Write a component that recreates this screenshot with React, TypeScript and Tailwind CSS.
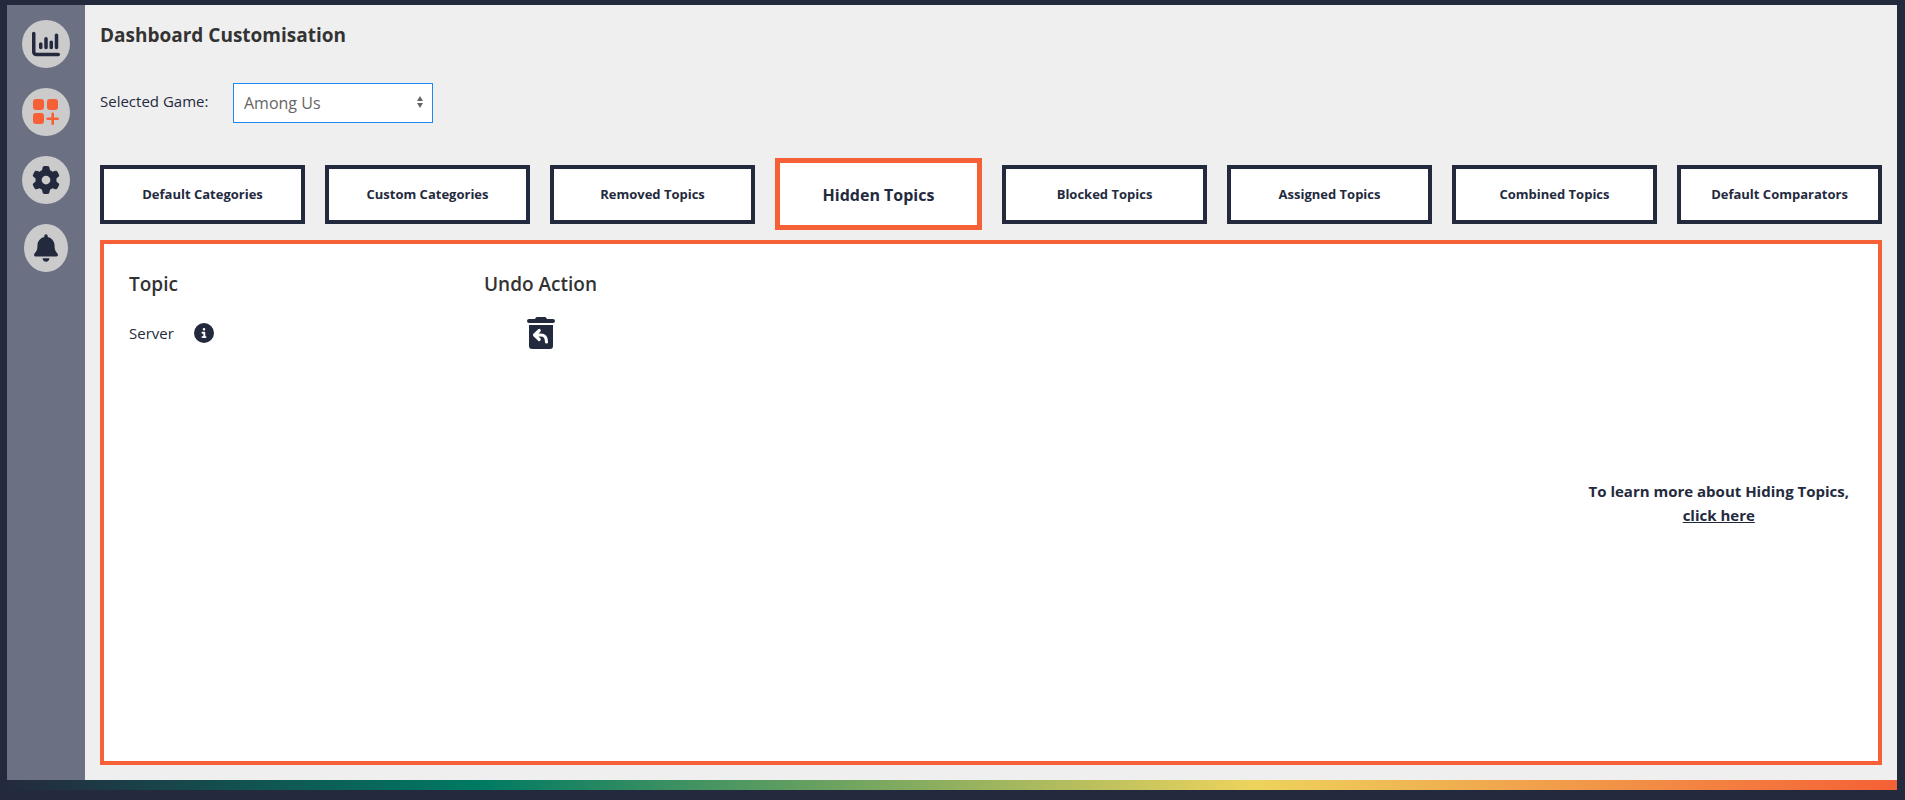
import React from 'react';
import { FaBell, FaChartColumn, FaCircleInfo, FaGear } from 'react-icons/fa6';
import clsx from 'clsx';

const tabs = [
  'Default Categories',
  'Custom Categories',
  'Removed Topics',
  'Hidden Topics',
  'Blocked Topics',
  'Assigned Topics',
  'Combined Topics',
  'Default Comparators',
];

const hiddenTopics = ['Server'];

export default function App() {
  return (
    <div className="min-h-screen flex flex-col bg-[#242a3e] pt-[5px] pb-[10px] pl-[7px] pr-2 font-['Open_Sans','Noto_Sans',sans-serif] text-[#242a3e]">
      <div className="flex-1 flex bg-[#efefef]">
        <Sidebar />
        <main className="flex-1 min-w-0 flex flex-col p-[15px]">
          <h1 className="text-[19px] leading-[30px] font-bold text-[#333333]">Dashboard Customisation</h1>

          {/* Game picker */}
          <div className="flex items-start mt-[33px]">
            <label htmlFor="game" className="w-[133px] text-[15px] leading-9">Selected Game:</label>
            <div className="relative">
              <select
                id="game"
                className="block appearance-none w-[200px] h-10 px-[10px] border border-[#1e87f0] bg-white text-base text-[#666666] outline-none"
              >
                <option>Among Us</option>
              </select>
              <svg className="absolute right-[10px] top-[13px] pointer-events-none" width="6" height="12" viewBox="0 0 6 12" fill="#666666">
                <path d="M0 5 3 0 6 5ZM0 7 3 12 6 7Z" />
              </svg>
            </div>
          </div>

          <nav className="flex items-center gap-5 mt-[35px]">
            {tabs.map((tab) => (
              <TabButton key={tab} label={tab} active={tab === 'Hidden Topics'} />
            ))}
          </nav>

          {/* Hidden topics panel */}
          <section className="flex-1 flex items-center justify-between mt-[10px] pl-[25px] pr-[29px] pt-5 pb-5 border-4 border-[#f56036] bg-white">
            <table className="self-start text-left">
              <thead>
                <tr className="h-10 text-[19px] text-[#333333]">
                  <th className="w-[355px] p-0 font-semibold">Topic</th>
                  <th className="p-0 font-semibold">Undo Action</th>
                </tr>
              </thead>
              <tbody>
                {hiddenTopics.map((topic) => (
                  <tr key={topic} className="h-[58px]">
                    <td className="p-0">
                      <div className="flex items-center gap-5 text-[15px]">
                        {topic}
                        <button aria-label={`About ${topic}`}>
                          <FaCircleInfo className="block w-5 h-5" />
                        </button>
                      </div>
                    </td>
                    <td className="p-0">
                      <button className="block mx-auto" aria-label={`Unhide ${topic}`}>
                        <TrashUndoIcon />
                      </button>
                    </td>
                  </tr>
                ))}
              </tbody>
            </table>
            <p className="text-center text-[15px] leading-6 font-bold">
              To learn more about Hiding Topics,
              <br />
              <a href="#help" className="underline">click here</a>
            </p>
          </section>
        </main>
      </div>
      <div className="h-[10px] bg-[linear-gradient(90deg,#242a3e_0%,#007a63_25%,#edd35c_66%,#f56036_100%)]" />
    </div>
  );
}

function Sidebar() {
  return (
    <aside className="w-[78px] flex flex-col items-center gap-5 pt-[15px] bg-[#6b7083]">
      <SidebarButton label="Statistics" icon={<FaChartColumn className="w-7 h-7" />} />
      <SidebarButton label="Customise" active icon={<GridPlusIcon />} />
      <SidebarButton label="Settings" icon={<FaGear className="w-7 h-7" />} />
      <SidebarButton label="Notifications" icon={<FaBell className="w-6 h-7" />} />
    </aside>
  );
}

interface SidebarButtonProps {
  label: string;
  icon: React.ReactNode;
  active?: boolean;
}

function SidebarButton({ label, icon, active }: SidebarButtonProps) {
  return (
    <button
      aria-label={label}
      className={clsx('p-[10px] rounded-[50%] bg-[#cbcbcb]', active && 'text-[#f56036]')}
    >
      {icon}
    </button>
  );
}

function TabButton({ label, active }: { label: string; active: boolean }) {
  return (
    <button
      className={clsx(
        'flex-1 pt-0.5 bg-white font-bold whitespace-nowrap',
        active ? 'h-[72px] border-5 border-[#f56036] text-base' : 'h-[59px] border-4 border-[#242a3e] text-[13px]'
      )}
    >
      {label}
    </button>
  );
}

function GridPlusIcon() {
  return (
    <svg width="28" height="28" viewBox="0 0 28 28" fill="currentColor">
      <rect x="1" y="1" width="11" height="11" rx="3" />
      <rect x="15" y="1" width="11" height="11" rx="3" />
      <rect x="1" y="15" width="11" height="11" rx="3" />
      <path d="M20.7 15.8v10M15.7 20.8h10" fill="none" stroke="currentColor" strokeWidth="2.6" strokeLinecap="round" />
    </svg>
  );
}

function TrashUndoIcon() {
  return (
    <svg width="28" height="32" viewBox="0 0 448 512" fill="currentColor">
      <path d="M135 18 128 32H32a32 32 0 0 0 0 64h384a32 32 0 0 0 0-64h-96l-7-14A32 32 0 0 0 284 0H164a32 32 0 0 0-29 18Z" />
      <path d="M32 128h384v336a48 48 0 0 1-48 48H80a48 48 0 0 1-48-48Z" />
      <path
        d="M196 216l-76 72 76 72M130 288h90c60 0 92 36 92 112"
        fill="none"
        stroke="#ffffff"
        strokeWidth="50"
        strokeLinecap="round"
        strokeLinejoin="round"
      />
    </svg>
  );
}
